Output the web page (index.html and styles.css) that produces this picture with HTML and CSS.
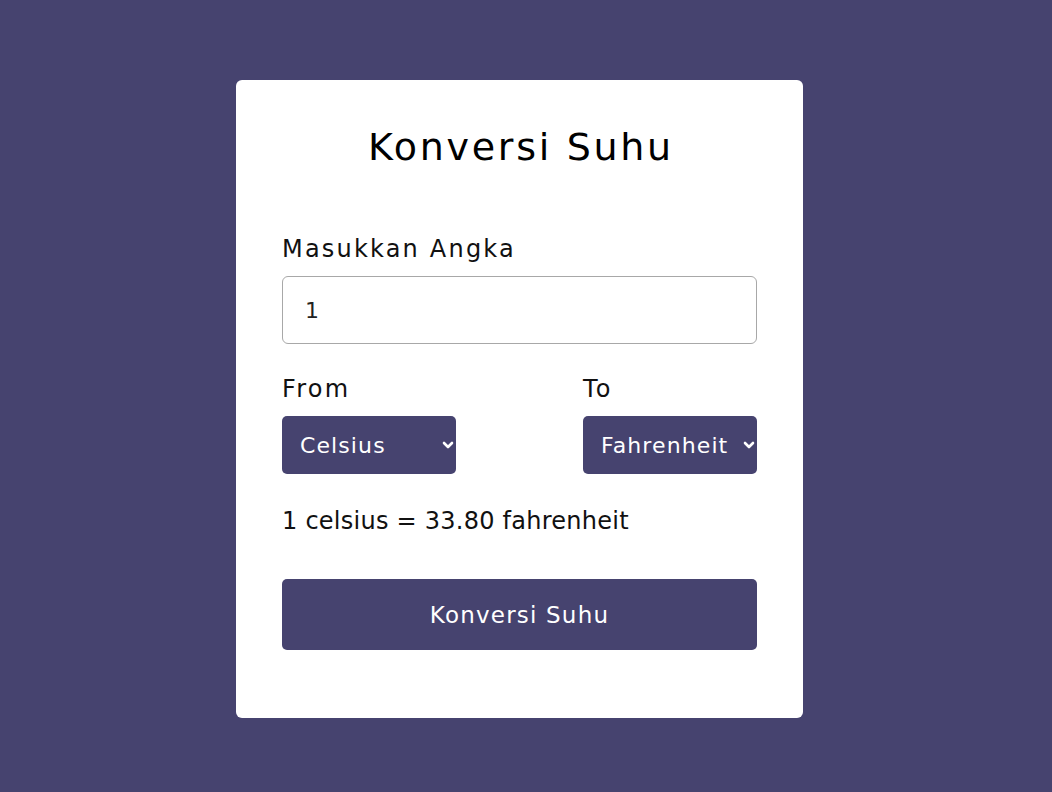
FILE: index.html
```html
<!DOCTYPE html>
<html lang="id">
<head>
<meta charset="utf-8">
<title>Konversi Suhu</title>
<link rel="stylesheet" href="styles.css">
</head>
<body>
<main class="page">
  <section class="card">
    <h1 class="title">Konversi Suhu</h1>
    <div class="field">
      <label class="label label-input" for="angka">Masukkan Angka</label>
      <input class="input" id="angka" type="text" value="1">
    </div>
    <div class="units">
      <div class="unit">
        <label class="label label-unit">From</label>
        <div class="select">
          <span class="select-text">Celsius</span>
          <svg class="chev" viewBox="0 0 12 8" width="12" height="8"><path d="M2 2l4 4 4-4" fill="none" stroke="#fff" stroke-width="2.6" stroke-linecap="round" stroke-linejoin="round"/></svg>
        </div>
      </div>
      <div class="unit">
        <label class="label label-unit">To</label>
        <div class="select">
          <span class="select-text">Fahrenheit</span>
          <svg class="chev" viewBox="0 0 12 8" width="12" height="8"><path d="M2 2l4 4 4-4" fill="none" stroke="#fff" stroke-width="2.6" stroke-linecap="round" stroke-linejoin="round"/></svg>
        </div>
      </div>
    </div>
    <p class="result">1 celsius = 33.80 fahrenheit</p>
    <button class="button" type="button">Konversi Suhu</button>
  </section>
</main>
</body>
</html>
```

FILE: styles.css
```css
* { box-sizing: border-box; }
html, body { margin: 0; height: 100%; }
body {
  background: #46436f;
  font-family: "DejaVu Sans", "Noto Sans", sans-serif;
  color: #111;
}
.page {
  display: flex;
  justify-content: center;
  padding: 80px 13px 0 0;
}
.card {
  width: 567px;
  background: #fff;
  border-radius: 6px;
  padding: 42px 46px 68px;
  display: flex;
  flex-direction: column;
}
.title {
  margin: 0 0 60px;
  padding-left: 3px;
  text-align: center;
  font-size: 38px;
  font-weight: 400;
  letter-spacing: 2.7px;
  line-height: 50px;
  color: #000;
}
.field { display: flex; flex-direction: column; }
.label {
  font-size: 24px;
  line-height: 34px;
  letter-spacing: 2.2px;
  color: #111;
}
.label-input { margin-bottom: 10px; }
.label-unit { margin-bottom: 10px; }
.input {
  height: 68px;
  border: 1px solid #a8a8a8;
  border-radius: 6px;
  padding: 0 22px;
  font-family: inherit;
  font-size: 22px;
  color: #222;
  outline: none;
}
.units {
  display: flex;
  justify-content: space-between;
  margin-top: 28px;
}
.unit { display: flex; flex-direction: column; width: 174px; }
.select {
  height: 58px;
  background: #46436f;
  border-radius: 5px;
  display: flex;
  align-items: center;
  justify-content: space-between;
  padding: 0 2px 0 18px;
  color: #fff;
  font-size: 22px;
  letter-spacing: 1.1px;
  white-space: nowrap;
}
.chev { flex: none; }
.result {
  margin: 30px 0 0;
  font-size: 24px;
  line-height: 34px;
  letter-spacing: 0.25px;
  color: #111;
}
.button {
  margin-top: 41px;
  height: 71px;
  border: none;
  border-radius: 5px;
  background: #46436f;
  color: #fff;
  font-family: inherit;
  font-size: 23px;
  letter-spacing: 1.2px;
}
```
